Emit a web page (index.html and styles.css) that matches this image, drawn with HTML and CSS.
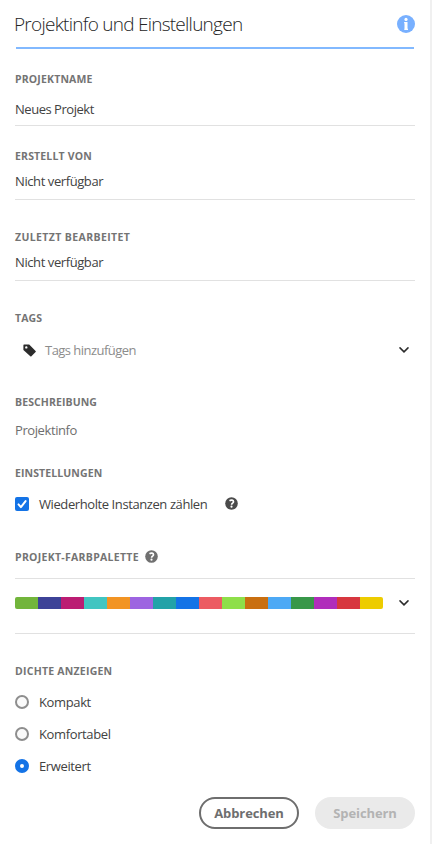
FILE: index.html
```html
<!DOCTYPE html>
<html lang="de">
<head>
<meta charset="utf-8">
<title>Projektinfo und Einstellungen</title>
<link rel="stylesheet" href="styles.css">
</head>
<body>
<main class="panel">
  <header class="header">
    <h1 class="title"><span>Projektinfo und Einstellungen</span></h1>
    <svg class="info" viewBox="0 0 18 18"><circle cx="9" cy="9" r="9" fill="#78b0ff"/><circle cx="9" cy="4.400" r="1.600" fill="#fff"/><path d="M7.500 7h3v6.800h.5V15H7.300v-1.200h.2V8.200h-.4V7z" fill="#fff"/></svg>
  </header>
  <section class="field name">
    <h2 class="label l-name">PROJEKTNAME</h2>
    <p class="value v-name">Neues Projekt</p>
  </section>
  <section class="field created">
    <h2 class="label l-created">ERSTELLT VON</h2>
    <p class="value v-na">Nicht verfügbar</p>
  </section>
  <section class="field edited">
    <h2 class="label l-edited">ZULETZT BEARBEITET</h2>
    <p class="value v-na">Nicht verfügbar</p>
  </section>
  <section class="tags">
    <h2 class="label l-tags">TAGS</h2>
    <div class="tag-row">
      <svg class="tag" viewBox="0 0 13 13"><path fill-rule="evenodd" d="M1 .6h5.200L12.600 7a.8.8 0 0 1 0 1.100L8.400 12.200a.8.8 0 0 1-1.100 0L.4 5.900V1.200A.6.6 0 0 1 1 .6zM3.300 2.200a1.200 1.200 0 1 0 0 2.400 1.200 1.200 0 0 0 0-2.400z" fill="#2c2c2c"/></svg>
      <span class="placeholder">Tags hinzufügen</span>
      <svg class="chevron" viewBox="0 0 10 6"><path d="M1 .9l4 4 4-4" fill="none" stroke="#2c2c2c" stroke-width="1.500" stroke-linecap="round"/></svg>
    </div>
  </section>
  <section class="description">
    <h2 class="label l-desc">BESCHREIBUNG</h2>
    <p class="value muted">Projektinfo</p>
  </section>
  <section class="settings">
    <h2 class="label l-settings">EINSTELLUNGEN</h2>
    <div class="option">
      <svg class="control" viewBox="0 0 14 14"><rect width="14" height="14" rx="2" fill="#1473e6"/><path d="M3.500 7.400l2.400 2.700 4.700-6" fill="none" stroke="#fff" stroke-width="2" stroke-linecap="round" stroke-linejoin="round"/></svg>
      <span class="o-count">Wiederholte Instanzen zählen</span>
      <svg class="help dark" viewBox="0 0 13 13"><circle cx="6.500" cy="6.500" r="6.300" fill="currentColor"/><path d="M4.500 3.700c1.500-1 4-.8 4 1 0 1.500-1.900 1.500-1.900 3" fill="none" stroke="#fff" stroke-width="1.700"/><circle cx="6.500" cy="9.700" r="1.100" fill="#fff"/></svg>
    </div>
  </section>
  <section class="palette">
    <h2 class="label palette-label"><span class="l-palette">PROJEKT-FARBPALETTE</span>
      <svg class="help" viewBox="0 0 13 13"><circle cx="6.500" cy="6.500" r="6.300" fill="currentColor"/><path d="M4.500 3.700c1.500-1 4-.8 4 1 0 1.500-1.900 1.500-1.900 3" fill="none" stroke="#fff" stroke-width="1.700"/><circle cx="6.500" cy="9.700" r="1.100" fill="#fff"/></svg>
    </h2>
    <div class="palette-row">
      <div class="swatches"><i class="c1"></i><i class="c2"></i><i class="c3"></i><i class="c4"></i><i class="c5"></i><i class="c6"></i><i class="c7"></i><i class="c8"></i><i class="c9"></i><i class="c10"></i><i class="c11"></i><i class="c12"></i><i class="c13"></i><i class="c14"></i><i class="c15"></i><i class="c16"></i></div>
      <svg class="chevron" viewBox="0 0 10 6"><path d="M1 .9l4 4 4-4" fill="none" stroke="#2c2c2c" stroke-width="1.500" stroke-linecap="round"/></svg>
    </div>
  </section>
  <section class="density">
    <h2 class="label l-density">DICHTE ANZEIGEN</h2>
    <div class="option"><span class="radio"></span><span class="o-compact">Kompakt</span></div>
    <div class="option"><span class="radio"></span><span class="o-comfort">Komfortabel</span></div>
    <div class="option"><span class="radio selected"></span><span class="o-expanded">Erweitert</span></div>
  </section>
  <footer class="footer">
    <button class="button cancel">Abbrechen</button>
    <button class="button save" disabled>Speichern</button>
  </footer>
</main>
</body>
</html>
```
FILE: styles.css
```css
* { box-sizing: border-box; }
body { margin: 0; background: #fff; }
.panel {
  height: 844px;
  padding: 0 15px;
  border-right: 2px solid #f0f0f0;
  font: 13px/20px "Open Sans", "Noto Sans", sans-serif;
  letter-spacing: -.41px;
  color: #424242;
  overflow: hidden;
}
h1, h2, p { margin: 0; }
svg { display: block; flex: none; }
.header {
  display: flex;
  align-items: center;
  justify-content: space-between;
  width: 398px;
  height: 49px;
  margin-left: 1px;
  border-bottom: 2px solid #82b9ff;
}
.title { margin-left: -2px; font-size: 19px; line-height: 28px; font-weight: 300; letter-spacing: -.75px; color: #252525; white-space: nowrap; }
.info { width: 18px; height: 18px; margin-right: -1px; }
.label { height: 16px; font-size: 10.5px; line-height: 16px; font-weight: 700; letter-spacing: .16px; color: #747474; white-space: nowrap; }
.l-edited { letter-spacing: .38px; }
.l-palette { letter-spacing: .29px; }
.l-density { letter-spacing: .23px; }
.l-settings, .l-desc, .l-tags { letter-spacing: .1px; }
.value { height: 20px; white-space: nowrap; }
.v-name { letter-spacing: -.47px; }
.placeholder { letter-spacing: -.53px; }
.field { width: 400px; border-bottom: 1px solid #e1e1e1; }
.name { height: 77px; padding-top: 22px; }
.name .value { margin-top: 12px; }
.created { height: 74px; padding-top: 22px; }
.edited { height: 81px; padding-top: 29px; }
.created .value, .edited .value { margin-top: 7px; }
.tags { padding-top: 29px; }
.tag-row { display: flex; align-items: center; width: 394px; height: 20px; margin-top: 14px; padding-left: 8px; color: #8c8c8c; }
.tag { width: 13px; height: 13px; margin-right: 9px; }
.chevron { width: 10px; height: 6px; margin-left: auto; }
.description { padding-top: 34px; }
.description .value { margin-top: 10px; }
.muted { color: #6e6e6e; }
.settings { padding-top: 25px; }
.option { display: flex; align-items: center; height: 20px; white-space: nowrap; }
.control { width: 14px; height: 14px; margin-right: 10px; }
.settings .option { margin-top: 13px; }
.help { width: 13px; height: 13px; color: #707070; }
.dark { color: #4b4b4b; margin: -2px 0 0 18px; }
.o-count { width: 168px; }
.o-compact, .o-comfort, .o-expanded { letter-spacing: -.37px; }
.palette { width: 400px; padding-top: 35px; }
.palette-label { display: flex; align-items: center; }
.palette-label .help { margin: -2px 0 0 6px; }
.l-palette { width: 124px; }
.palette-row { display: flex; align-items: center; height: 56px; margin-top: 13px; padding: 0 6px 6px 0; border-top: 1px solid #e1e1e1; border-bottom: 1px solid #e1e1e1; }
.swatches { display: flex; width: 368px; height: 12px; border-radius: 2px; overflow: hidden; }
.swatches i { flex: 1; }
.c1 { background: #72b53b; }
.c2 { background: #3d4297; }
.c3 { background: #bb1d73; }
.c4 { background: #41c5c1; }
.c5 { background: #f29423; }
.c6 { background: #9d64e1; }
.c7 { background: #22a2a8; }
.c8 { background: #1473e6; }
.c9 { background: #ec5b62; }
.c10 { background: #8edf49; }
.c11 { background: #c96f10; }
.c12 { background: #4da9f5; }
.c13 { background: #389749; }
.c14 { background: #b02dbb; }
.c15 { background: #d7373f; }
.c16 { background: #edcc00; }
.density { padding-top: 29px; }
.density .option { margin-top: 12px; }
.density .label + .option { margin-top: 13px; }
.radio { width: 14px; height: 14px; margin-right: 10px; border: 2px solid #8e8e8e; border-radius: 50%; background: #fafafa; }
.selected { border: 5px solid #1473e6; background: #fff; }
.footer { display: flex; justify-content: flex-end; gap: 16px; width: 400px; margin-top: 21px; }
.button { width: 100px; height: 32px; padding: 0; border: 2px solid #6e6e6e; border-radius: 16px; background: #fff; font: inherit; font-weight: 700; letter-spacing: -.1px; color: #6e6e6e; }
.save { border-color: #eaeaea; background: #eaeaea; color: #b3b3b3; }
```
